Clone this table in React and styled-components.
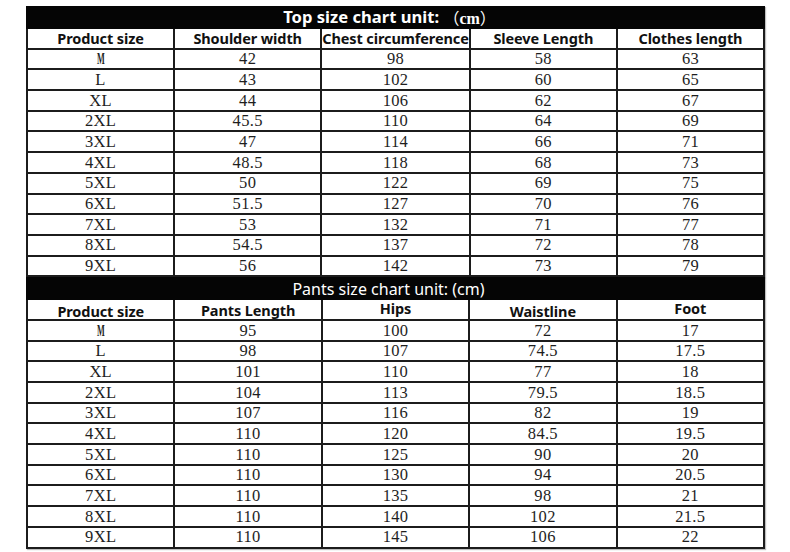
import React from 'react';
import styled, { createGlobalStyle } from 'styled-components';

const GlobalStyle = createGlobalStyle`
  html, body {
    margin: 0;
    padding: 0;
    background: #ffffff;
  }
  body {
    width: 790px;
    height: 552px;
    overflow: hidden;
  }
`;

const Page = styled.div`
  padding: 6px 0 0 26px;
`;

const Sheet = styled.div`
  width: 739px;
  box-sizing: border-box;
  display: grid;
  grid-template-columns: repeat(5, 1fr);
  grid-template-rows: 21px;
  grid-auto-rows: 18.7px;
  gap: 2px;
  padding: 0 2px 2px 2px;
  background: #1c1c1c;
  box-shadow: 1px 1px 1px rgba(0, 0, 0, 0.25);
`;

const TitleBar = styled.div`
  grid-column: 1 / -1;
  background: #050505;
  color: #ffffff;
  display: flex;
  align-items: center;
  justify-content: center;
  padding-left: ${p => (p.bold ? '2px' : '0')};
  padding-right: 14px;
  margin: 0 -2px -2px;
  font-family: "Noto Sans", "Open Sans", sans-serif;
  font-size: ${p => (p.bold ? '16.6px' : '16px')};
  font-weight: ${p => (p.bold ? 700 : 400)};
  white-space: pre;
  line-height: 1;
`;

const Unit = styled.span`
  font-family: "Liberation Serif", "Noto Sans CJK SC", serif;
  font-weight: 700;
  font-size: 16px;
`;

const Paren = styled.span`
  font-family: "Noto Sans CJK SC", sans-serif;
  font-weight: 400;
`;

const HeadCell = styled.div`
  background: #ffffff;
  color: #111111;
  display: flex;
  align-items: center;
  justify-content: center;
  font-family: "Noto Sans", "Open Sans", sans-serif;
  font-weight: 700;
  font-size: 14.5px;
  letter-spacing: -0.1px;
  white-space: nowrap;
  line-height: 1;
  span {
    position: relative;
    top: ${p => p.shift || 0}px;
  }
`;

const Cell = styled.div`
  background: #ffffff;
  color: #1e1e1e;
  display: flex;
  align-items: center;
  justify-content: center;
  font-family: "Liberation Serif", serif;
  font-size: 16.5px;
  letter-spacing: 0.3px;
  line-height: 1;
  padding-top: 1px;
`;

const Squeezed = styled.span`
  display: inline-block;
  transform: scale(0.5, 1.05);
  font-weight: 700;
`;

const sizes = ['M', 'L', 'XL', '2XL', '3XL', '4XL', '5XL', '6XL', '7XL', '8XL', '9XL'];

const topRows = [
  [42, 98, 58, 63],
  [43, 102, 60, 65],
  [44, 106, 62, 67],
  ['45.5', 110, 64, 69],
  [47, 114, 66, 71],
  ['48.5', 118, 68, 73],
  [50, 122, 69, 75],
  ['51.5', 127, 70, 76],
  [53, 132, 71, 77],
  ['54.5', 137, 72, 78],
  [56, 142, 73, 79],
];

const pantsRows = [
  [95, 100, 72, 17],
  [98, 107, '74.5', '17.5'],
  [101, 110, 77, 18],
  [104, 113, '79.5', '18.5'],
  [107, 116, 82, 19],
  [110, 120, '84.5', '19.5'],
  [110, 125, 90, 20],
  [110, 130, 94, '20.5'],
  [110, 135, 98, 21],
  [110, 140, 102, '21.5'],
  [110, 145, 106, 22],
];

const topHeads = [
  ['Product size', 0],
  ['Shoulder width', 0],
  ['Chest circumference', 0],
  ['Sleeve Length', 0],
  ['Clothes length', 0],
];

const pantsHeads = [
  ['Product size', 2],
  ['Pants Length', 1],
  ['Hips', -1],
  ['Waistline', 2],
  ['Foot', -1],
];

const ChartSection = ({ title, heads, rows }) => (
  <Sheet>
    {title}
    {heads.map(([label, shift]) => (
      <HeadCell key={label} shift={shift}>
        <span>{label}</span>
      </HeadCell>
    ))}
    {rows.map((row, i) => (
      <React.Fragment key={sizes[i]}>
        <Cell>{sizes[i] === 'M' ? <Squeezed>M</Squeezed> : sizes[i]}</Cell>
        {row.map((v, j) => (
          <Cell key={j}>{v}</Cell>
        ))}
      </React.Fragment>
    ))}
  </Sheet>
);

export default function App() {
  return (
    <>
      <GlobalStyle />
      <Page>
        <ChartSection
          title={
            <TitleBar bold>
              Top size chart unit: <Unit><Paren>（</Paren>cm<Paren>）</Paren></Unit>
            </TitleBar>
          }
          heads={topHeads}
          rows={topRows}
        />
        <ChartSection
          title={<TitleBar>Pants size chart unit: (cm)</TitleBar>}
          heads={pantsHeads}
          rows={pantsRows}
        />
      </Page>
    </>
  );
}
